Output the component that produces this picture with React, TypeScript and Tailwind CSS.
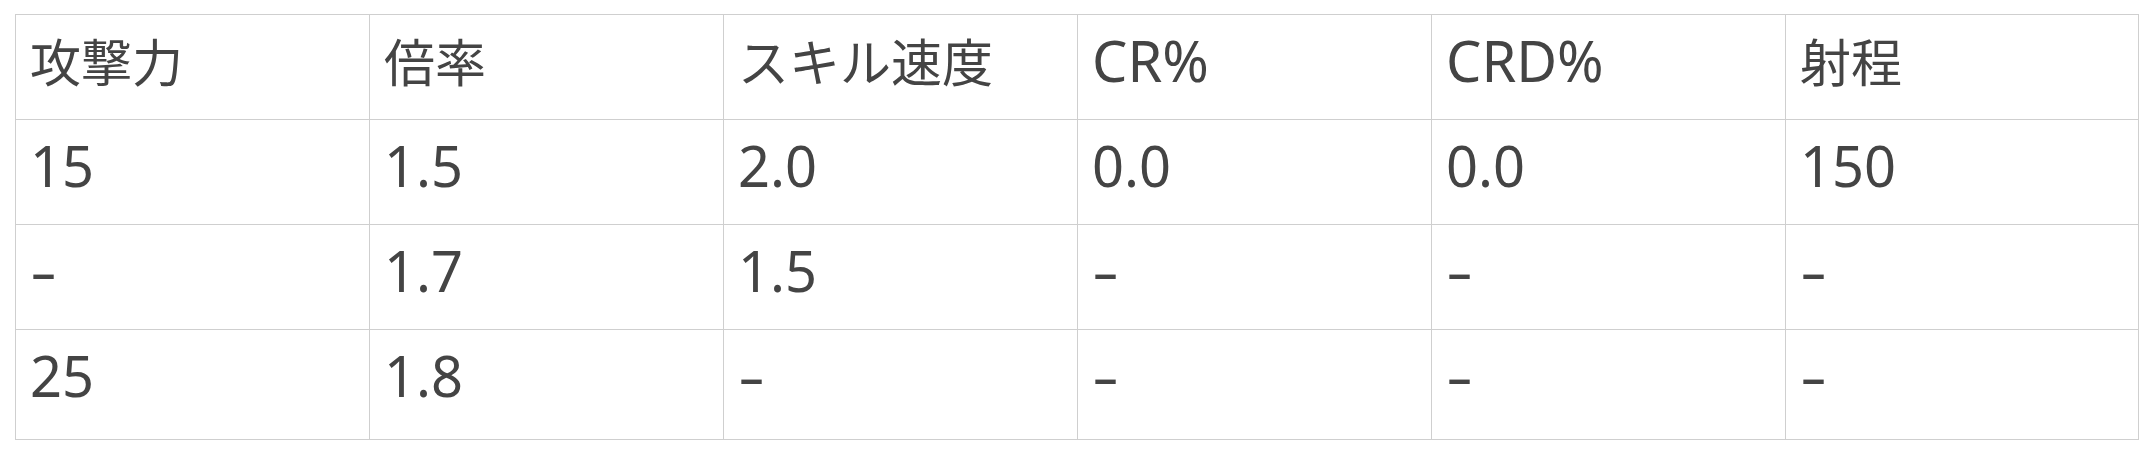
import React from "react";

const headers = ["攻撃力", "倍率", "スキル速度", "CR%", "CRD%", "射程"];
const rows = [
  ["15", "1.5", "2.0", "0.0", "0.0", "150"],
  ["-", "1.7", "1.5", "-", "-", "-"],
  ["25", "1.8", "-", "-", "-", "-"],
];

const isCJK = (s: string) => /[\u3000-\u9fff]/.test(s);

function Cell({ text, last, lastRow }: { text: string; last: boolean; lastRow: boolean }) {
  return (
    <div
      className={
        "border-b border-[#cfcfcf] pl-[14px] pt-[17px] leading-[56px] text-[56px] " +
        (last ? "w-[353px] border-r " : "w-[354px] border-r ") +
        (lastRow ? "h-[110px]" : "h-[105px]")
      }
    >
      {text === "-" ? (
        <span className="inline-block origin-left scale-x-150">-</span>
      ) : isCJK(text) ? (
        <span className="text-[51px]">{text}</span>
      ) : (
        text
      )}
    </div>
  );
}

export default function App() {
  const all = [headers, ...rows];
  return (
    <div className="min-h-[462px] w-full bg-white pl-[15px] pt-[14px]">
      <div
        className="inline-flex flex-col border-l border-t border-[#cfcfcf] text-[#444444]"
        style={{ fontFamily: '"Noto Sans", "Noto Sans CJK JP", sans-serif' }}
      >
        {all.map((r, ri) => (
          <div key={ri} className="flex">
            {r.map((c, ci) => (
              <Cell key={ci} text={c} last={ci === r.length - 1} lastRow={ri === all.length - 1} />
            ))}
          </div>
        ))}
      </div>
    </div>
  );
}
